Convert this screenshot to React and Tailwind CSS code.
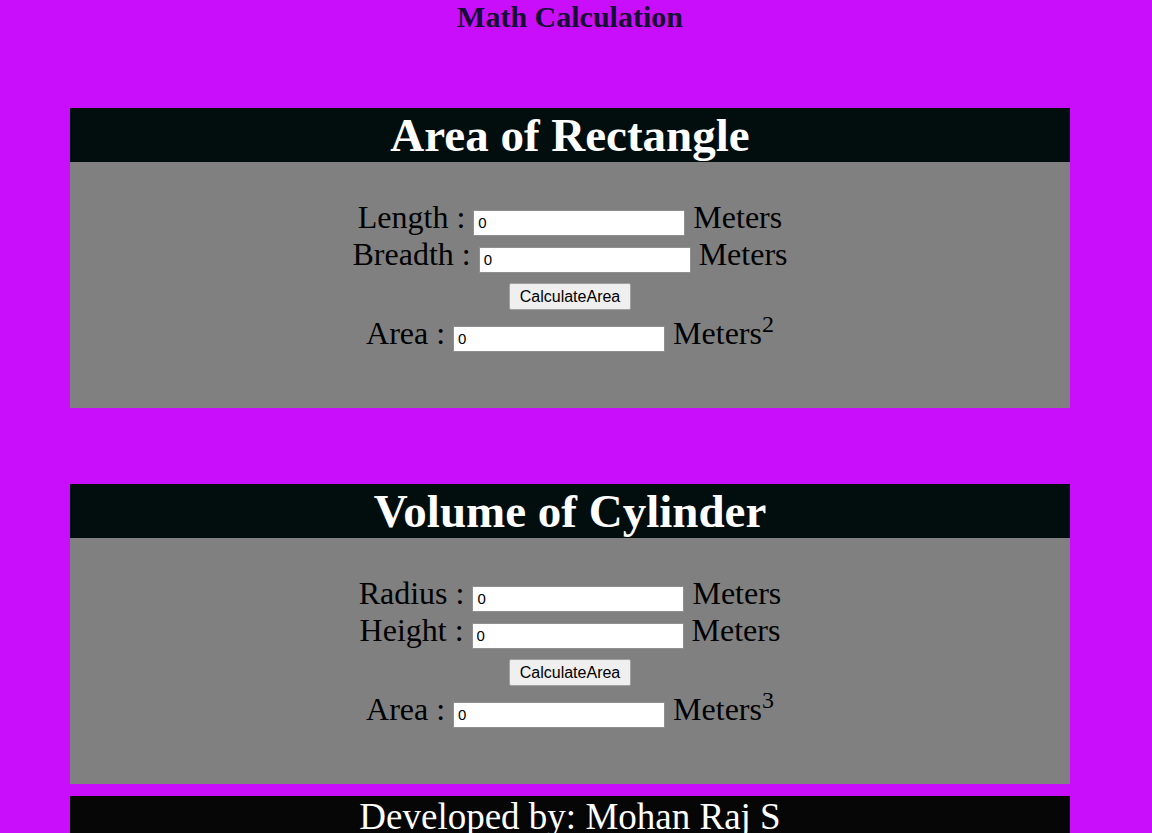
import { useState } from 'react'

const serif = { fontFamily: '"Liberation Serif", "Times New Roman", serif' }

function Field({ label, value, onChange, unit, sup }) {
  return (
    <div className="text-[32px] leading-[37px] text-black text-center whitespace-nowrap">
      {label} :{' '}
      <input
        value={value}
        onChange={(e) => onChange(e.target.value)}
        className="inline-block align-bottom w-[212px] h-[26px] bg-white border border-[#8f8f8f] px-[4px] pb-[2px] text-[15px] text-black outline-none font-['Liberation_Sans',Arial,sans-serif]"
      />{' '}
      {unit}
      {sup && <sup>{sup}</sup>}
    </div>
  )
}

function Panel({ title, fields, result, sup, onCalc }) {
  return (
    <section className="w-full">
      <h2 className="h-[54px] bg-[#020d0d] text-white text-[47px] leading-[54px] font-bold text-center">
        {title}
      </h2>
      <div className="bg-[#808080] pt-[37px] pb-[56px]">
        {fields.map((f) => (
          <Field key={f.label} {...f} />
        ))}
        <div className="flex justify-center mt-[10px] mb-[5px]">
          <button
            onClick={onCalc}
            className="h-[27px] px-[10px] bg-[#efefef] border border-[#a0a0a0] rounded-[2px] text-[16px] text-black font-['Liberation_Sans',Arial,sans-serif]"
          >
            CalculateArea
          </button>
        </div>
        <Field label="Area" value={result} onChange={() => {}} unit="Meters" sup={sup} />
      </div>
    </section>
  )
}

export default function App() {
  const [length, setLength] = useState('0')
  const [breadth, setBreadth] = useState('0')
  const [area, setArea] = useState('0')
  const [radius, setRadius] = useState('0')
  const [height, setHeight] = useState('0')
  const [volume, setVolume] = useState('0')

  return (
    <div className="min-h-screen bg-[#c90efc]" style={serif}>
      <div className="ml-[70px] w-[1000px]">
        <h1 className="text-[30px] leading-[34px] font-bold text-center text-[#140f33]">
          Math Calculation
        </h1>

        <div className="mt-[74px]">
          <Panel
            title="Area of Rectangle"
            fields={[
              { label: 'Length', value: length, onChange: setLength, unit: 'Meters' },
              { label: 'Breadth', value: breadth, onChange: setBreadth, unit: 'Meters' },
            ]}
            result={area}
            sup="2"
            onCalc={() => setArea(String(Number(length) * Number(breadth)))}
          />
        </div>

        <div className="mt-[76px]">
          <Panel
            title="Volume of Cylinder"
            fields={[
              { label: 'Radius', value: radius, onChange: setRadius, unit: 'Meters' },
              { label: 'Height', value: height, onChange: setHeight, unit: 'Meters' },
            ]}
            result={volume}
            sup="3"
            onCalc={() =>
              setVolume(String(Math.PI * Number(radius) * Number(radius) * Number(height)))
            }
          />
        </div>

        {/* Footer */}
        <footer className="mt-[12px] bg-[#060606] text-white text-center text-[37px] leading-[42px]">
          Developed by: Mohan Raj S
        </footer>
      </div>
    </div>
  )
}
